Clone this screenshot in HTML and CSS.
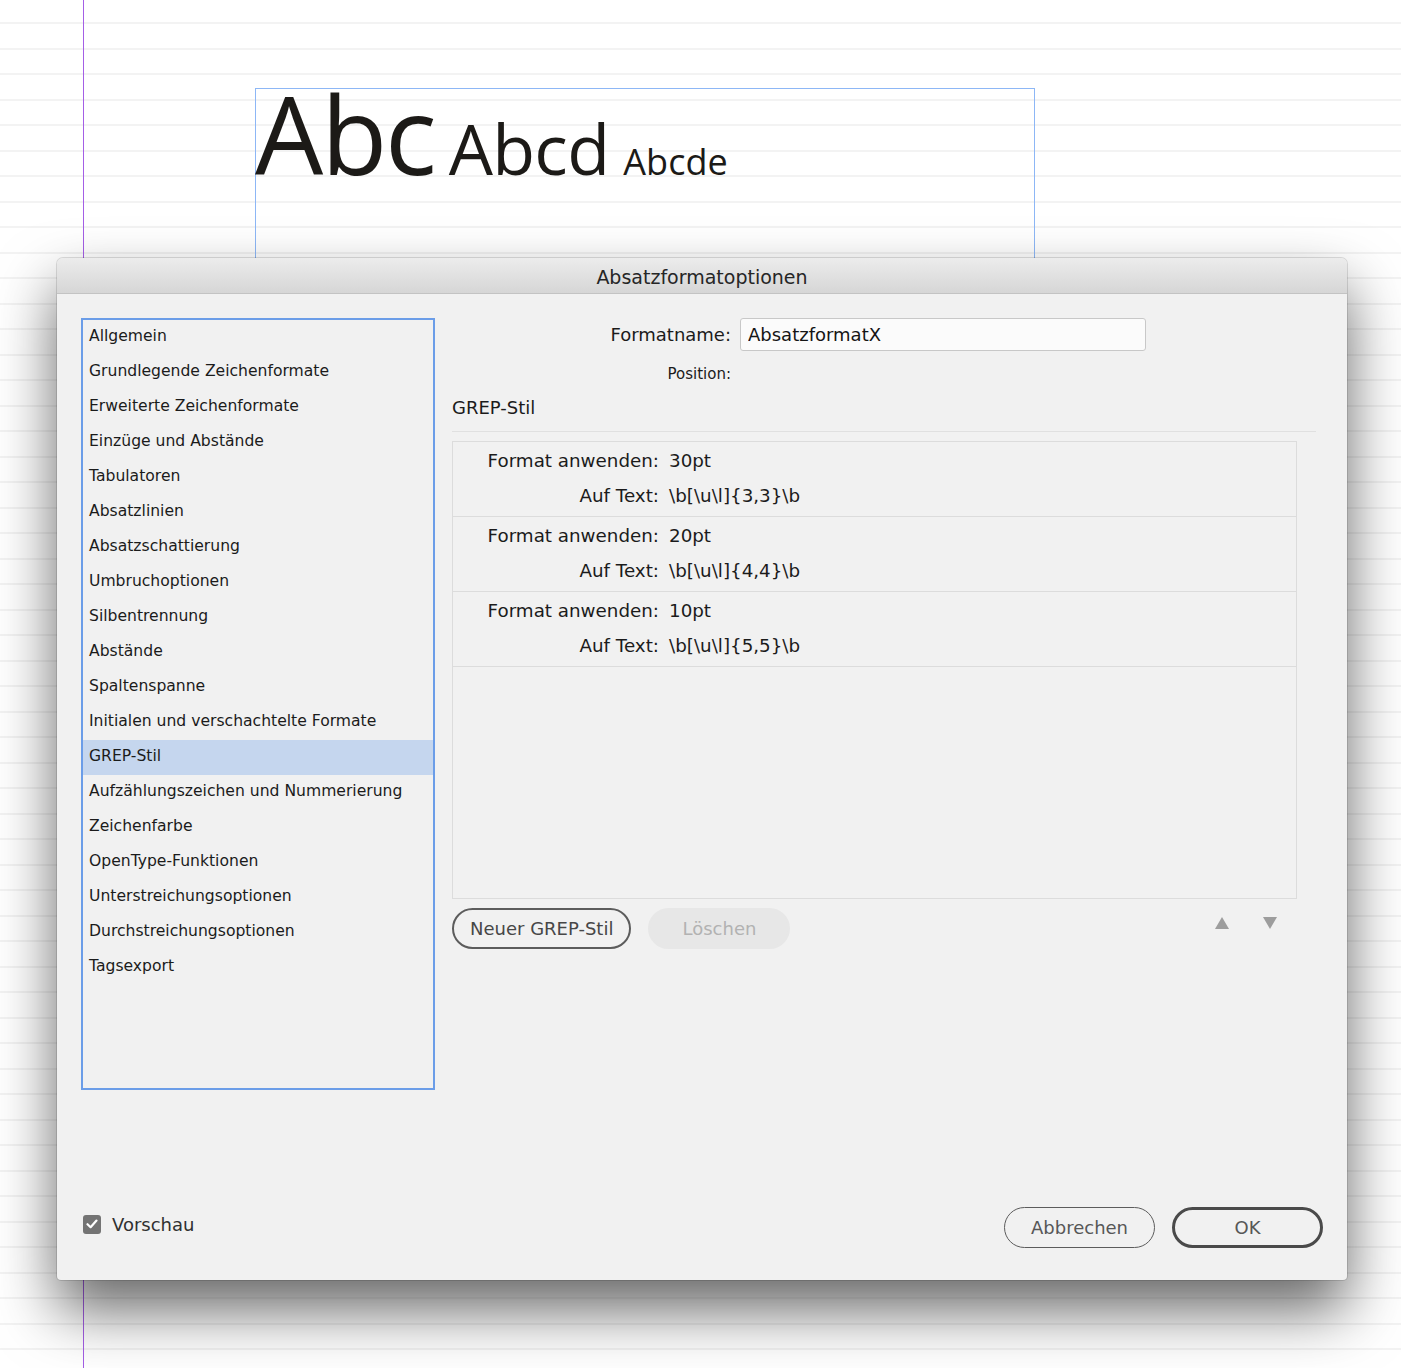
FILE: index.html
```html
<!DOCTYPE html>
<html>
<head>
  <title>Absatzformatoptionen</title>
  <link rel="stylesheet" href="styles.css">
</head>
<body class="pasteboard">
  <div class="guide"></div>

  <div class="text-frame">
    <p class="sample"><span class="size-30">Abc</span> <span class="size-20">Abcd</span> <span class="size-10">Abcde</span></p>
  </div>

  <div class="dialog">
    <div class="titlebar">Absatzformatoptionen</div>

    <div class="dialog-body">
      <div class="main">
        <ul class="categories">
          <li>Allgemein</li>
          <li>Grundlegende Zeichenformate</li>
          <li>Erweiterte Zeichenformate</li>
          <li>Einzüge und Abstände</li>
          <li>Tabulatoren</li>
          <li>Absatzlinien</li>
          <li>Absatzschattierung</li>
          <li>Umbruchoptionen</li>
          <li>Silbentrennung</li>
          <li>Abstände</li>
          <li>Spaltenspanne</li>
          <li>Initialen und verschachtelte Formate</li>
          <li class="selected">GREP-Stil</li>
          <li>Aufzählungszeichen und Nummerierung</li>
          <li>Zeichenfarbe</li>
          <li>OpenType-Funktionen</li>
          <li>Unterstreichungsoptionen</li>
          <li>Durchstreichungsoptionen</li>
          <li>Tagsexport</li>
        </ul>

        <div class="panel">
          <div class="field-row">
            <label class="field-label" for="style-name">Formatname:</label>
            <input class="text-input" id="style-name" type="text" value="AbsatzformatX">
          </div>
          <div class="position-row">
            <span class="field-label">Position:</span>
          </div>

          <h3 class="section-title">GREP-Stil</h3>

          <div class="grep-list">
            <div class="grep-item">
              <span class="grep-label">Format anwenden:</span><span>30pt</span>
              <span class="grep-label">Auf Text:</span><span>\b[\u\l]{3,3}\b</span>
            </div>
            <div class="grep-item">
              <span class="grep-label">Format anwenden:</span><span>20pt</span>
              <span class="grep-label">Auf Text:</span><span>\b[\u\l]{4,4}\b</span>
            </div>
            <div class="grep-item">
              <span class="grep-label">Format anwenden:</span><span>10pt</span>
              <span class="grep-label">Auf Text:</span><span>\b[\u\l]{5,5}\b</span>
            </div>
          </div>

          <div class="grep-actions">
            <button class="pill-button">Neuer GREP-Stil</button>
            <button class="pill-button disabled">Löschen</button>
            <div class="order-arrows">
              <svg width="14" height="12" viewBox="0 0 14 12"><polygon points="7,0 14,12 0,12" fill="#9d9d9d"/></svg>
              <svg width="14" height="12" viewBox="0 0 14 12"><polygon points="0,0 14,0 7,12" fill="#9d9d9d"/></svg>
            </div>
          </div>
        </div>
      </div>

      <div class="footer">
        <label class="preview">
          <span class="checkbox">
            <svg width="12" height="10" viewBox="0 0 12 10"><path d="M1.5 5.2 L4.6 8.2 L10.5 1.6" fill="none" stroke="#fff" stroke-width="2.2" stroke-linecap="round" stroke-linejoin="round"/></svg>
          </span>
          Vorschau
        </label>
        <div class="footer-buttons">
          <button class="pill-button wide">Abbrechen</button>
          <button class="pill-button wide default">OK</button>
        </div>
      </div>
    </div>
  </div>
</body>
</html>
```

FILE: styles.css
```css
body {
  margin: 0;
  padding: 0;
}

/* page with baseline grid */
.pasteboard {
  position: relative;
  width: 1401px;
  height: 1368px;
  overflow: hidden;
  background-color: #fff;
  background-image: repeating-linear-gradient(to bottom, transparent 0, transparent 24.5px, #e7e7e7 24.5px, #e7e7e7 25.5px);
  background-position: 0 -1.5px;
}

.guide {
  position: absolute;
  left: 83px;
  top: 0;
  width: 1px;
  height: 100%;
  background-color: #a45ee6;
}

.text-frame {
  position: absolute;
  left: 255px;
  top: 88px;
  width: 778px;
  height: 220px;
  border: 1px solid #8db7f6;
}

.sample {
  margin: -9px 0 0 -1px;
  font-family: "Open Sans", sans-serif;
  font-size: 54px;
  line-height: 1;
  color: #1c1a17;
  white-space: nowrap;
}

.size-30 { font-size: 108px; letter-spacing: -0.02em; }
.size-20 { font-size: 70px; letter-spacing: -0.01em; }
.size-10 { font-size: 36px; }

/* dialog window */
.dialog {
  position: absolute;
  left: 57px;
  top: 258px;
  width: 1290px;
  height: 1022px;
  display: flex;
  flex-direction: column;
  border-radius: 6px 6px 4px 4px;
  background-color: #f1f1f1;
  box-shadow: 0 0 0 1px rgba(0, 0, 0, 0.12), 0 30px 60px rgba(0, 0, 0, 0.6);
  font-family: "DejaVu Sans", sans-serif;
  color: #1b1b1b;
  overflow: hidden;
}

.titlebar {
  height: 35px;
  line-height: 38px;
  text-align: center;
  font-size: 19px;
  color: #262626;
  background: linear-gradient(to bottom, #ececec, #d6d6d6);
  border-bottom: 1px solid #c3c3c3;
}

.dialog-body {
  flex: 1;
  display: flex;
  flex-direction: column;
  padding: 24px 24px 32px 24px;
}

.main {
  display: flex;
  gap: 17px;
}

.categories {
  list-style: none;
  margin: 0;
  padding: 0;
  width: 350px;
  height: 768px;
  border: 2px solid #6b9de8;
  font-size: 15.6px;
}

.categories li {
  height: 35px;
  line-height: 33px;
  padding-left: 6px;
}

.categories li.selected {
  background-color: #c5d6ee;
}

.panel {
  flex: 1;
  padding-right: 7px;
}

.field-row {
  display: flex;
  align-items: center;
  gap: 9px;
}

.field-label {
  display: inline-block;
  width: 279px;
  text-align: right;
  font-size: 18px;
}

.text-input {
  width: 406px;
  height: 33px;
  box-sizing: border-box;
  padding: 0 7px;
  border: 1px solid #c8c8c8;
  border-radius: 3px;
  background-color: #fbfbfb;
  font-family: "DejaVu Sans", sans-serif;
  font-size: 18px;
  color: #151515;
}

.position-row {
  margin-top: 12px;
  line-height: 22px;
}

.position-row .field-label {
  font-size: 15px;
}

.section-title {
  margin: 12px 0 0;
  padding-bottom: 12px;
  line-height: 22px;
  font-size: 18px;
  font-weight: normal;
  border-bottom: 1px solid #e0e0e0;
}

.grep-list {
  width: 843px;
  height: 456px;
  margin-top: 9px;
  border: 1px solid #dcdcdc;
}

.grep-item {
  display: grid;
  grid-template-columns: 206px 1fr;
  column-gap: 10px;
  padding: 1px 0 3px;
  line-height: 35px;
  font-size: 18.3px;
  border-bottom: 1px solid #dcdcdc;
}

.grep-label {
  text-align: right;
}

.grep-actions {
  display: flex;
  margin-top: 9px;
  gap: 17px;
}

.pill-button {
  height: 41px;
  padding: 0 16px;
  border: 2px solid #5c5c5c;
  border-radius: 21px;
  background: transparent;
  font-family: "DejaVu Sans", sans-serif;
  font-size: 18px;
  color: #474747;
}

.pill-button.disabled {
  width: 142px;
  border-color: #e7e7e7;
  background-color: #e7e7e7;
  color: #b2b2b2;
}

.order-arrows {
  display: flex;
  gap: 34px;
  margin: 9px 39px 0 auto;
  align-self: flex-start;
}

.footer {
  margin-top: auto;
  display: flex;
  align-items: flex-start;
}

.preview {
  display: flex;
  align-items: center;
  gap: 11px;
  height: 22px;
  margin-top: 6px;
  padding-left: 2px;
  font-size: 18px;
  color: #303030;
}

.checkbox {
  display: flex;
  align-items: center;
  justify-content: center;
  width: 18px;
  height: 19px;
  border-radius: 3px;
  background-color: #747474;
}

.footer-buttons {
  display: flex;
  gap: 17px;
  margin-left: auto;
}

.pill-button.wide {
  width: 151px;
  border-width: 1.5px;
  color: #575757;
}

.pill-button.default {
  border-width: 3px;
  border-color: #4a4a4a;
}
```
